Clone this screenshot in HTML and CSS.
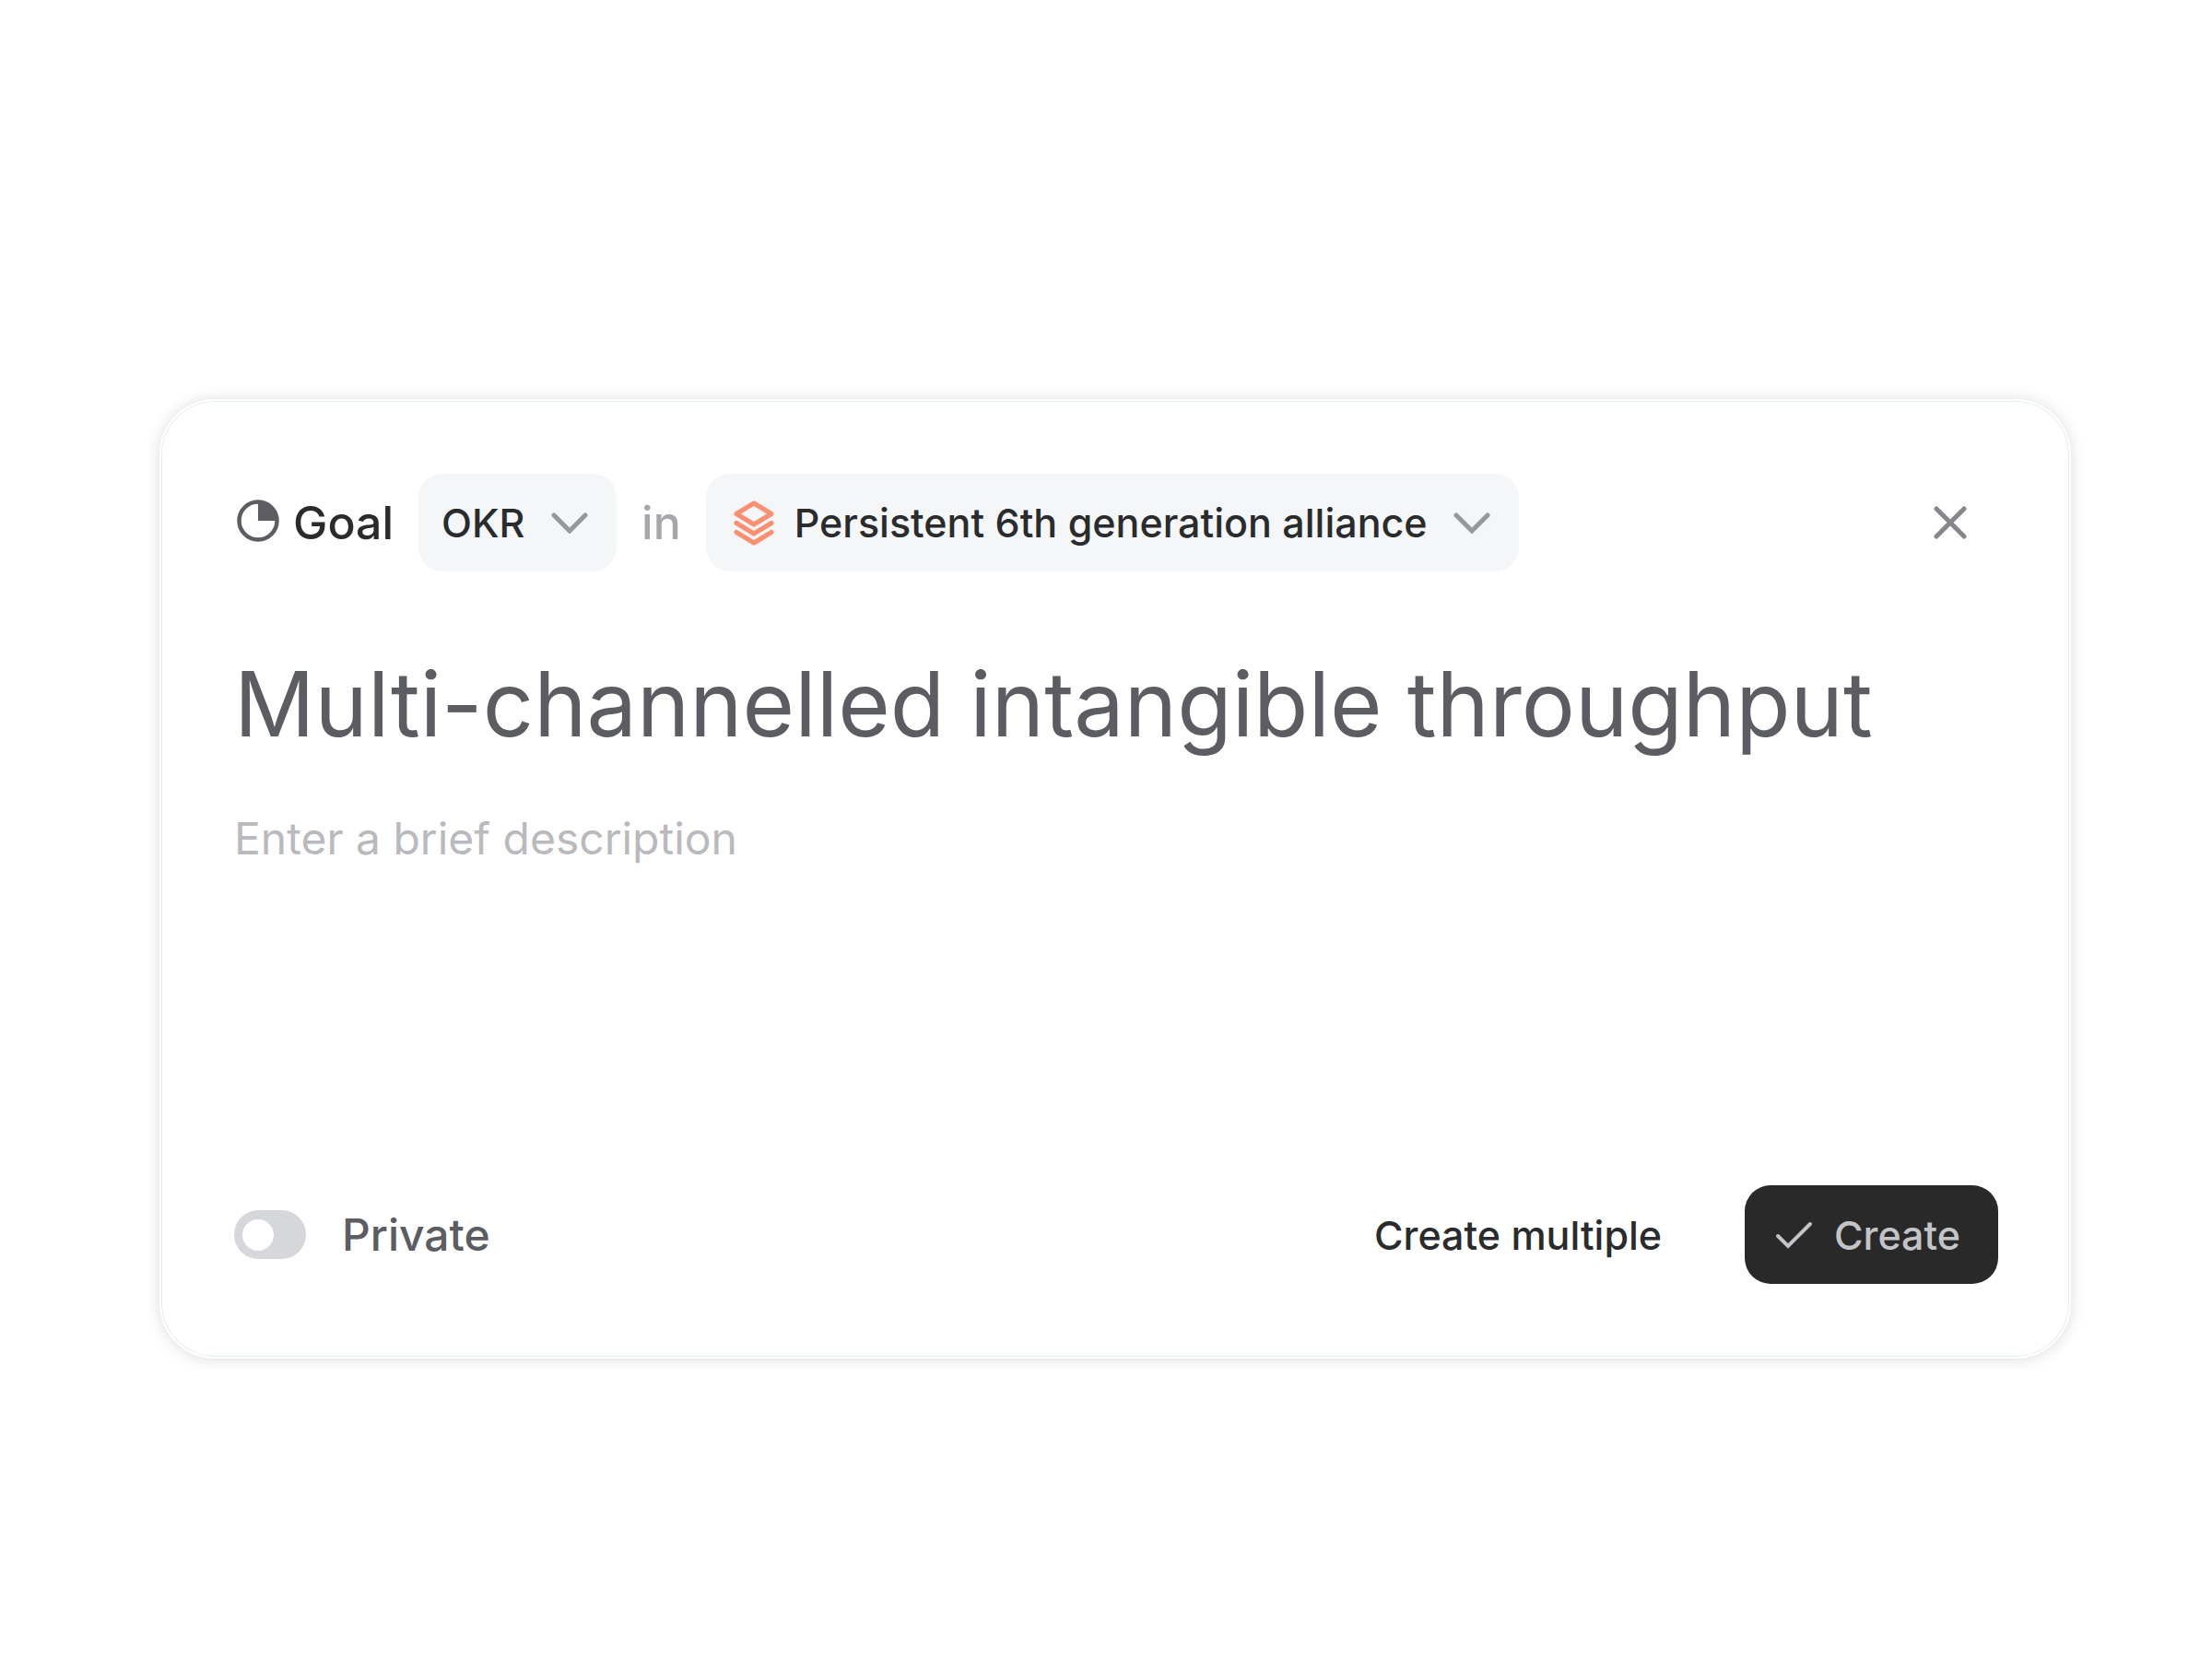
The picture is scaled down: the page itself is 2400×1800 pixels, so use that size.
FILE: index.html
```
<!DOCTYPE html>
<html lang="en">
<head>
<meta charset="utf-8">
<meta name="viewport" content="width=device-width, initial-scale=1">
<title>New goal</title>
<link rel="stylesheet" href="styles.css">
</head>
<body>
<form class="dialog" aria-label="New goal">
  <header class="dialog-header">
    <h1 class="kind">
      <svg class="kind-icon" viewBox="0 0 52 52" aria-hidden="true">
        <circle cx="26" cy="24" r="20.5" fill="none" stroke="#5c5d62" stroke-width="4.5"/>
        <path d="M26 3a21 21 0 0 1 21 21H26z" fill="#5c5d62"/>
      </svg>
      Goal
    </h1>
    <div class="picker">
      <select class="picker-select" aria-label="Goal type">
        <option>OKR</option>
      </select>
      <svg class="chevron" viewBox="0 0 40 24" aria-hidden="true">
        <path d="M3 4l17 17L37 4" fill="none" stroke="#96989c" stroke-width="5" stroke-linecap="round"/>
      </svg>
    </div>
    <span class="joiner">in</span>
    <div class="picker picker-space">
      <svg class="layers" viewBox="0 0 44 50" fill="none" stroke="#fb8f70" stroke-width="5" stroke-linejoin="round" stroke-linecap="round" aria-hidden="true">
        <path d="M22 4L41 15.500L22 27L3 15.500z"/>
        <path d="M3 25.500L22 37L41 25.500"/>
        <path d="M3 35.500L22 47L41 35.500"/>
      </svg>
      <select class="picker-select" aria-label="Space">
        <option>Persistent 6th generation alliance</option>
      </select>
      <svg class="chevron" viewBox="0 0 40 24" aria-hidden="true">
        <path d="M3 4l17 17L37 4" fill="none" stroke="#96989c" stroke-width="5" stroke-linecap="round"/>
      </svg>
    </div>
    <button class="close" type="button" aria-label="Close">
      <svg class="close-icon" viewBox="0 0 36 36" aria-hidden="true">
        <path d="M3 3l30 30M33 3L3 33" fill="none" stroke="#85878b" stroke-width="5" stroke-linecap="round"/>
      </svg>
    </button>
  </header>

  <input class="title" type="text" aria-label="Title" value="Multi-channelled intangible throughput">
  <textarea class="description" rows="5" aria-label="Description" placeholder="Enter a brief description"></textarea>

  <footer class="dialog-footer">
    <label class="private">
      <input class="switch" type="checkbox" role="switch">
      Private
    </label>
    <button class="button button-plain" type="button">Create multiple</button>
    <button class="button button-primary" type="submit">
      <svg class="check" viewBox="0 0 42 30" aria-hidden="true">
        <path d="M3 16l11 11L38 3" fill="none" stroke="#c3c4c7" stroke-width="4" stroke-linecap="round"/>
      </svg>
      Create
    </button>
  </footer>
</form>
</body>
</html>
```

FILE: styles.css
```
* {
  box-sizing: border-box;
}

body {
  margin: 0;
  padding: 433px 153px 64px 173px;
  background: #fff;
  color: #2a2b2d;
  font-family: Inter, "Liberation Sans", sans-serif;
}

button,
input,
select,
textarea {
  margin: 0;
  padding: 0;
  border: 0;
  background: none;
  color: inherit;
  font: inherit;
}

.dialog {
  display: flex;
  flex-direction: column;
  padding: 79px 77px 79px 79px;
  border: 2px solid #fff;
  border-radius: 60px;
  background: #fff;
  box-shadow: 0 1px 16px rgba(0, 0, 0, 0.14), inset 0 0 0 1px #e0eeee;
}

.dialog-header {
  display: flex;
  align-items: center;
  gap: 27px;
}

.kind {
  display: flex;
  align-items: center;
  gap: 12px;
  margin: 0;
  font-size: 50px;
  font-weight: 500;
}

.kind-icon {
  width: 52px;
  height: 52px;
}

.picker {
  display: grid;
  align-items: center;
}

.picker > * {
  grid-area: 1 / 1;
}

.picker-select {
  height: 106px;
  padding: 0 99px 0 25px;
  border-radius: 26px;
  background: #f4f6f8;
  font-size: 43px;
  font-weight: 500;
  appearance: none;
}

.picker-space .picker-select {
  padding-left: 96px;
}

.chevron,
.layers {
  z-index: 1;
  pointer-events: none;
}

.chevron {
  justify-self: end;
  width: 40px;
  height: 24px;
  margin-right: 31px;
}

.layers {
  width: 44px;
  height: 50px;
  margin-left: 30px;
}

.joiner {
  color: #a5a7ab;
  font-size: 50px;
  font-weight: 500;
}

.close {
  display: grid;
  place-items: center;
  width: 104px;
  height: 104px;
  margin-left: auto;
}

.close-icon {
  width: 36px;
  height: 36px;
}

.title {
  width: 100%;
  height: 120px;
  margin-top: 84px;
  color: #5c5d62;
  font-size: 97px;
  line-height: 120px;
}

.description {
  width: 100%;
  margin: 56px 0 106px;
  font-size: 48px;
  line-height: 60px;
  resize: none;
}

.description::placeholder {
  color: #b9babe;
  opacity: 1;
}

.dialog-footer {
  display: flex;
  align-items: center;
}

.private {
  display: flex;
  align-items: center;
  gap: 39px;
  margin-right: auto;
  color: #5c5d62;
  font-size: 48px;
  font-weight: 500;
}

.switch {
  display: flex;
  align-items: center;
  width: 78px;
  height: 53px;
  padding: 9px;
  border-radius: 27px;
  background: #d6d7db;
  appearance: none;
}

.switch::before {
  content: "";
  width: 34px;
  height: 34px;
  border-radius: 50%;
  background: #fff;
}

.switch:checked {
  justify-content: flex-end;
}

.button {
  display: flex;
  align-items: center;
  gap: 22px;
  height: 107px;
  border-radius: 28px;
  font-size: 43px;
  font-weight: 500;
}

.button-plain {
  padding: 0 46px;
  margin-right: 44px;
}

.button-primary {
  padding: 0 41px 0 33px;
  background: #292929;
  color: #c3c4c7;
}

.check {
  width: 42px;
  height: 30px;
}
```
